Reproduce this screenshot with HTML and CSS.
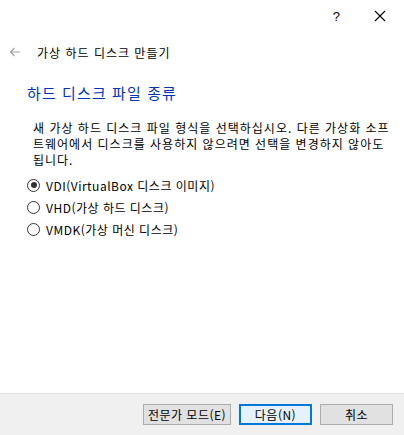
FILE: index.html
```html
<!DOCTYPE html>
<html lang="ko">
<head>
<meta charset="utf-8">
<link rel="stylesheet" href="styles.css">
</head>
<body>
<div class="dialog">
  <div class="titlebar">
    <span class="help">?</span>
    <svg class="close" width="12" height="12" viewBox="0 0 12 12"><path d="M1 1 L11 11 M11 1 L1 11" stroke="#000" stroke-width="1.1" fill="none"/></svg>
  </div>
  <div class="nav">
    <svg class="back" width="12" height="10" viewBox="0 0 12 10"><path d="M11 5 H1.5 M5.5 1 L1.5 5 L5.5 9" stroke="#a0a0a0" stroke-width="1.2" fill="none"/></svg>
    <span class="navtitle">가상 하드 디스크 만들기</span>
  </div>
  <div class="content">
    <h1 class="heading">하드 디스크 파일 종류</h1>
    <p class="desc">새 가상 하드 디스크 파일 형식을 선택하십시오. 다른 가상화 소프트웨어에서 디스크를 사용하지 않으려면 선택을 변경하지 않아도 됩니다.</p>
    <div class="options">
      <label class="opt"><span class="radio checked"></span>VDI(VirtualBox 디스크 이미지)</label>
      <label class="opt"><span class="radio"></span>VHD(가상 하드 디스크)</label>
      <label class="opt"><span class="radio"></span>VMDK(가상 머신 디스크)</label>
    </div>
  </div>
  <div class="footer">
    <button class="btn w88">전문가 모드(E)</button>
    <button class="btn default">다음(N)</button>
    <button class="btn">취소</button>
  </div>
</div>
</body>
</html>
```
FILE: styles.css
```css
html, body {
  margin: 0;
  padding: 0;
  background: #fff;
}
body {
  font-family: "Noto Sans CJK KR", "Liberation Sans", sans-serif;
  font-size: 12px;
  color: #000;
}
.dialog {
  width: 404px;
  height: 435px;
  display: flex;
  flex-direction: column;
}
.titlebar {
  height: 32px;
  display: flex;
  align-items: center;
  justify-content: flex-end;
  padding-right: 18px;
  gap: 34px;
}
.help {
  font-family: "Liberation Sans", sans-serif;
  font-size: 13px;
}
.close { display: block; }
.nav {
  display: flex;
  align-items: center;
  height: 40px;
  padding-left: 9px;
  gap: 16px;
}
.back { display: block; }
.navtitle {
  font-size: 12px;
  letter-spacing: 1px;
}
.content {
  flex: 1;
  padding: 0 12px 0 27px;
}
.heading {
  margin: 10px 0 0;
  font-size: 15px;
  font-weight: normal;
  color: #0033bc;
  line-height: 22px;
  letter-spacing: 1.1px;
}
.desc {
  margin: 16px 0 0 6px;
  line-height: 16px;
  letter-spacing: 1px;
}
.options {
  margin-top: 6px;
  display: flex;
  flex-direction: column;
}
.opt {
  display: flex;
  align-items: center;
  height: 22px;
  gap: 6px;
  letter-spacing: 0.5px;
}
.radio {
  width: 11px;
  height: 11px;
  border: 1px solid #333;
  border-radius: 50%;
  box-sizing: content-box;
  position: relative;
  background: #fff;
}
.radio.checked::after {
  content: "";
  position: absolute;
  left: 2.5px;
  top: 2.5px;
  width: 6px;
  height: 6px;
  border-radius: 50%;
  background: #333;
}
.footer {
  height: 41px;
  background: #f0f0f0;
  border-top: 1px solid #dfdfdf;
  display: flex;
  align-items: center;
  justify-content: flex-end;
  padding-right: 11px;
  gap: 8px;
}
.btn {
  font-family: "Noto Sans CJK KR", "Liberation Sans", sans-serif;
  font-size: 12px;
  letter-spacing: 0.5px;
  width: 73px;
  height: 21px;
  padding: 0;
  margin: 0;
  background: #e1e1e1;
  border: 1px solid #adadad;
  color: #000;
  line-height: 18px;
}
.btn.w88 { width: 88px; }
.btn.default {
  background: #e5f1fb;
  border: 2px solid #0078d7;
}
```
